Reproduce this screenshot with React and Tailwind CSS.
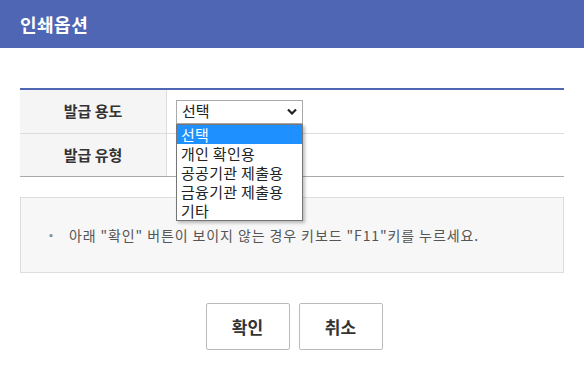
const options = ['선택', '개인 확인용', '공공기관 제출용', '금융기관 제출용', '기타']

function Chevron() {
  return (
    <svg width="10" height="7" viewBox="0 0 10 7" className="text-[#222]">
      <path d="M1 1.5 L5 5.5 L9 1.5" fill="none" stroke="currentColor" strokeWidth="2.2" />
    </svg>
  )
}

function SelectBox() {
  return (
    <div className="relative w-[127px]">
      <div className="h-[24px] border border-[#a9a9a9] bg-white flex items-center justify-between pl-[5px] pr-[5px] text-[15px] text-[#222]">
        <span>선택</span>
        <Chevron />
      </div>
      <ul className="absolute left-0 top-full w-[127px] border border-[#767676] bg-white shadow-[2px_2px_3px_rgba(0,0,0,0.25)] z-10 text-[15px] leading-[19px] tracking-[0.3px]">
        {options.map((o, i) => (
          <li
            key={o}
            className={i === 0 ? 'bg-[#1e90ff] text-white px-[4px]' : 'text-[#222] px-[4px]'}
          >
            {o}
          </li>
        ))}
      </ul>
    </div>
  )
}

export default function App() {
  return (
    <div
      className="w-[584px] h-[373px] bg-white overflow-hidden"
      style={{ fontFamily: '"Noto Sans CJK KR", "Noto Sans", sans-serif' }}
    >
      <div className="h-[48px] bg-[#4e66b4] flex items-center px-5">
        <h1 className="text-white font-bold text-[18px] tracking-[0.5px]">인쇄옵션</h1>
      </div>

      <div className="px-5 pt-10">
        <div className="border-t-2 border-[#4e66b4]">
          <div className="flex h-[44px] border-b border-[#dddddd]">
            <div className="w-[147px] shrink-0 bg-[#f5f5f5] border-r border-[#dddddd] flex items-center justify-center text-[15px] font-semibold text-[#333]">
              발급 용도
            </div>
            <div className="flex items-center pl-[9px]">
              <SelectBox />
            </div>
          </div>
          <div className="flex h-[43px] border-b border-[#aaaaaa]">
            <div className="w-[147px] shrink-0 bg-[#f5f5f5] border-r border-[#dddddd] flex items-center justify-center text-[15px] font-semibold text-[#333]">
              발급 유형
            </div>
            <div className="flex-1" />
          </div>
        </div>

        <div className="mt-5 h-[76px] border border-[#dddddd] bg-[#f7f7f7] flex items-center pl-[25px] text-[14px] tracking-[0.9px] text-[#555]">
          <span className="mr-[12px] text-[10px] text-[#888]">▪</span>
          <span>아래 "확인" 버튼이 보이지 않는 경우 키보드 "F11"키를 누르세요.</span>
        </div>

        <div className="mt-[30px] flex justify-center gap-[9px] pl-[4px]">
          <button className="w-[84px] h-[47px] border border-[#bbbbbb] rounded-[2px] bg-white text-[17px] font-bold text-[#333]">
            확인
          </button>
          <button className="w-[84px] h-[47px] border border-[#bbbbbb] rounded-[2px] bg-white text-[17px] font-bold text-[#333]">
            취소
          </button>
        </div>
      </div>
    </div>
  )
}
